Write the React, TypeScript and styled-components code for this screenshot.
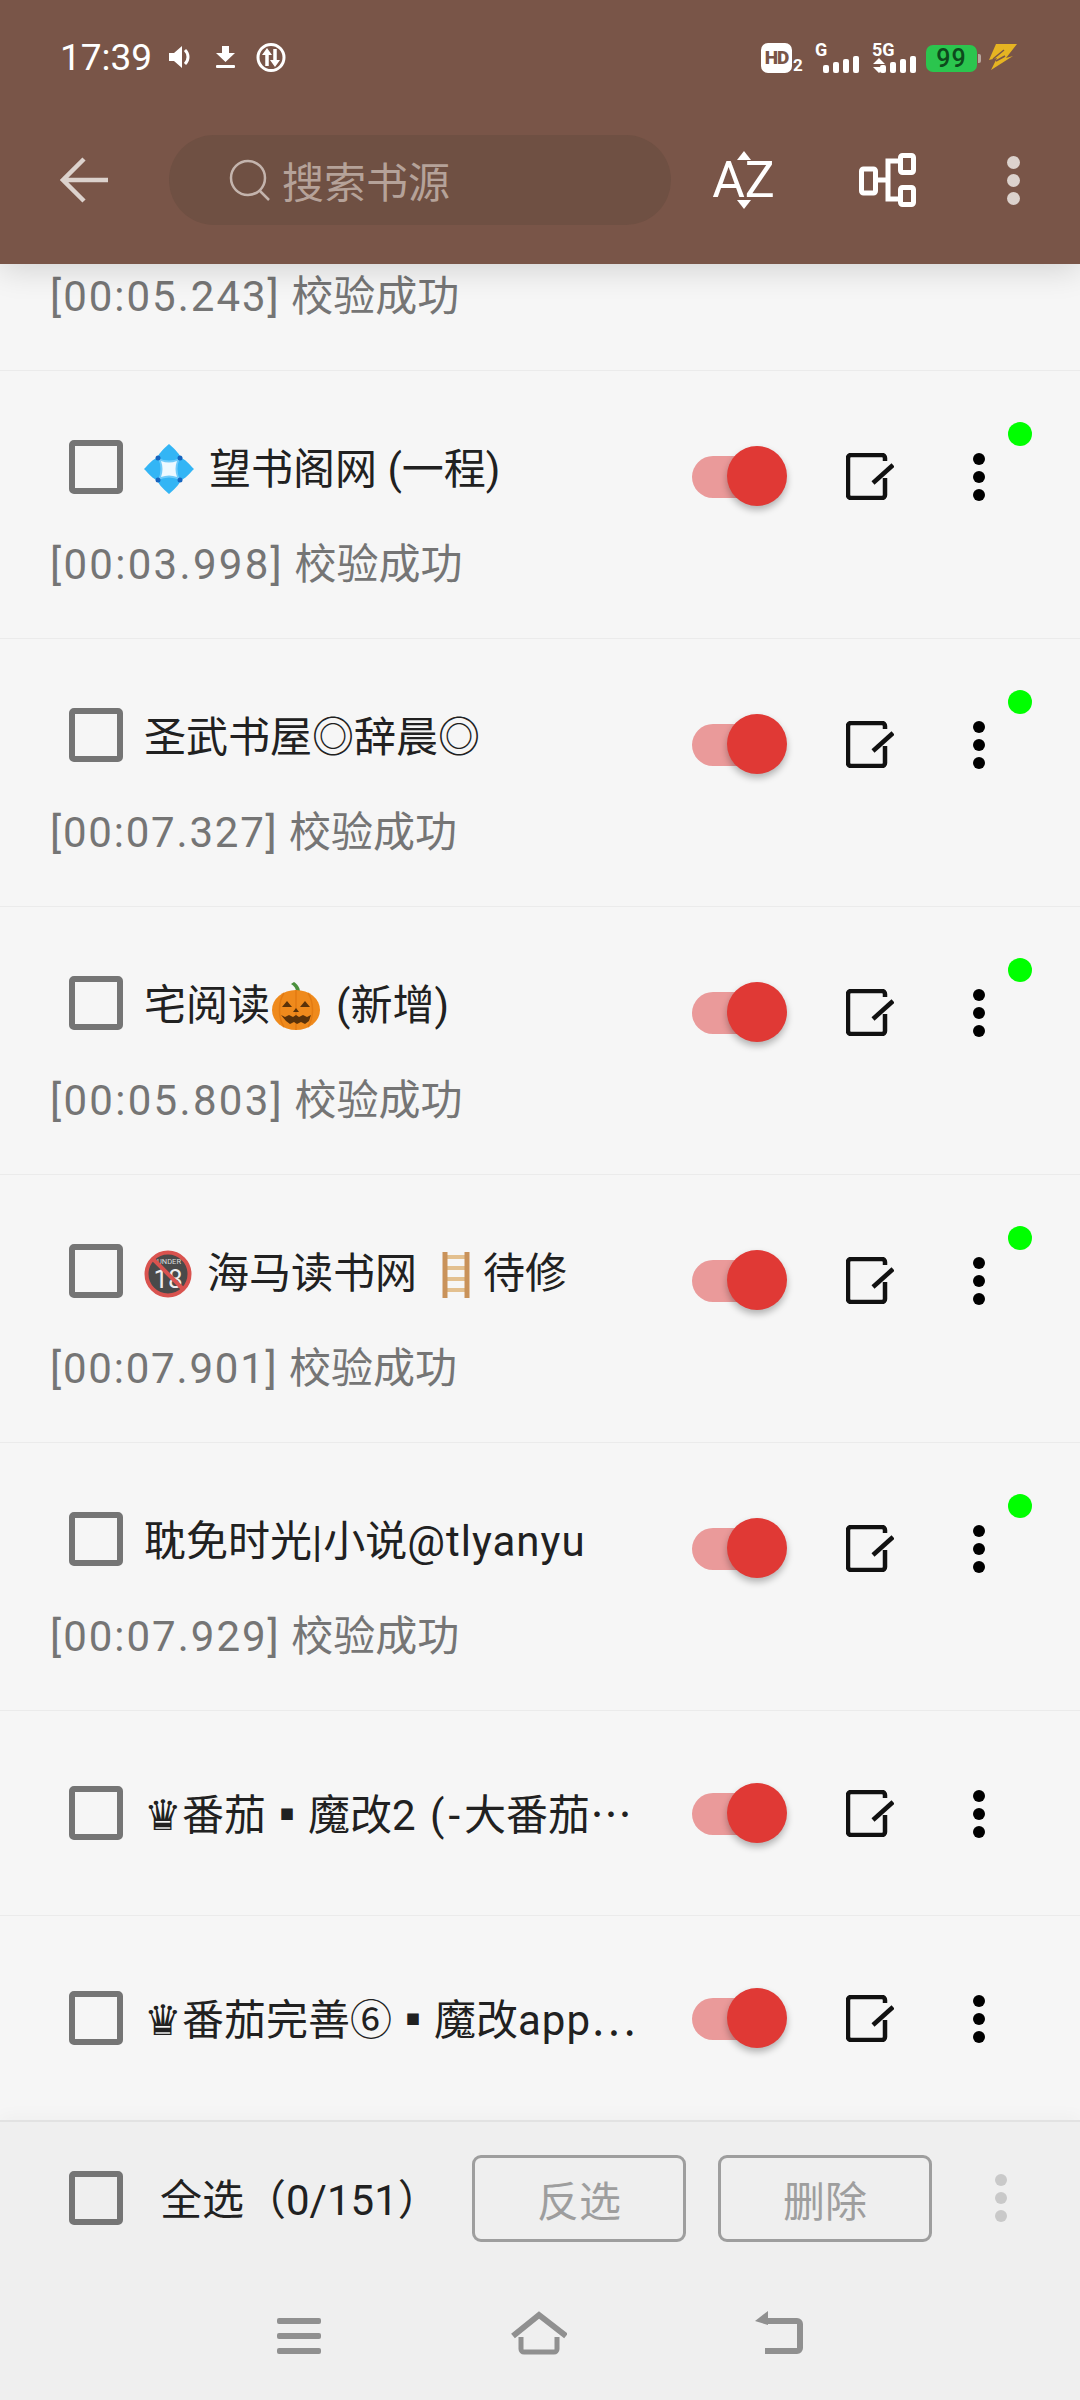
import React from 'react'
import styled, { createGlobalStyle } from 'styled-components'

const FONT = `Roboto, "Noto Sans CJK SC", sans-serif`

const GlobalStyle = createGlobalStyle`
  html, body {
    margin: 0;
    padding: 0;
    background: #f6f6f6;
  }
  * {
    box-sizing: border-box;
  }
`

const Page = styled.div`
  width: 1080px;
  height: 2400px;
  display: flex;
  flex-direction: column;
  overflow: hidden;
  background: #f6f6f6;
  font-family: ${FONT};
`

const Header = styled.header`
  height: 264px;
  flex: none;
  background: #795548;
  position: relative;
  z-index: 2;
  box-shadow: 0 6px 30px rgba(0, 0, 0, 0.14);
`

const StatusBar = styled.div`
  height: 96px;
  padding: 18px 62px 0 60px;
  display: flex;
  align-items: center;
`

const Clock = styled.span`
  font-size: 37px;
  color: #fff;
  margin-right: 19px;
  width: 90px;
`

const StatusGlyph = styled.svg<{ $ml?: number; $mb?: number }>`
  display: block;
  flex: none;
  margin-left: ${(p) => p.$ml ?? 0}px;
  margin-bottom: ${(p) => p.$mb ?? 0}px;
`

const StatusRight = styled.div`
  margin-left: auto;
  display: flex;
  align-items: flex-end;
  height: 32px;
`

const HdBadge = styled.span`
  width: 31px;
  height: 30px;
  border-radius: 7px;
  background: #fff;
  color: #795548;
  font-size: 19px;
  font-weight: 900;
  line-height: 30px;
  text-align: center;
  letter-spacing: -1px;
`

const HdIndex = styled.span`
  margin-left: 1px;
  width: 12px;
  color: #fff;
  font-size: 17px;
  font-weight: 700;
  line-height: 15px;
`

const Signal = styled.div<{ $w: number; $ml: number }>`
  position: relative;
  width: ${(p) => p.$w}px;
  height: 30px;
  margin-left: ${(p) => p.$ml}px;
  display: flex;
  align-items: flex-end;
  justify-content: flex-end;
  gap: 4px;
`

const SignalLabel = styled.span`
  position: absolute;
  left: 0;
  top: -2px;
  color: #fff;
  font-size: 18px;
  font-weight: 700;
  line-height: 17px;
`

const Bar = styled.i<{ $h: number }>`
  display: block;
  width: 6px;
  height: ${(p) => p.$h}px;
  border-radius: 2px;
  background: #fff;
`

const Arrows = styled.svg`
  position: absolute;
  left: 0;
  bottom: 0;
`

const Battery = styled.div`
  width: 51px;
  height: 27px;
  margin-left: 10px;
  margin-bottom: 1px;
  border-radius: 7px;
  background: #2bc54e;
  color: #0d4a1c;
  font-size: 25px;
  font-weight: 500;
  line-height: 27px;
  text-align: center;
  letter-spacing: 1px;
`

const BatteryNub = styled.i`
  display: block;
  width: 3px;
  height: 9px;
  margin: 0 0 10px 1px;
  border-radius: 0 2px 2px 0;
  background: #b9a79f;
`

const Toolbar = styled.div`
  height: 168px;
  padding-left: 60px;
  display: flex;
  align-items: center;
`

const SearchBox = styled.div`
  width: 502px;
  height: 90px;
  margin-left: 61px;
  padding-left: 60px;
  border-radius: 45px;
  background: #6f5043;
  display: flex;
  align-items: center;
  gap: 11px;
`

const SearchHint = styled.span`
  font-size: 42px;
  color: #b5a299;
  margin-bottom: 2px;
`

const SortIcon = styled.div`
  width: 61px;
  margin-left: 42px;
  display: flex;
  flex-direction: column;
  align-items: center;
  gap: 3px;
  color: #fff;
`

const SortLetters = styled.span`
  font-size: 50px;
  line-height: 34px;
  height: 34px;
  white-space: nowrap;
`

const Triangle = styled.i<{ $down?: boolean }>`
  display: block;
  width: 0;
  height: 0;
  border-left: 7px solid transparent;
  border-right: 7px solid transparent;
  ${(p) => (p.$down ? 'border-top: 9px solid #fff;' : 'border-bottom: 9px solid #fff;')}
`

const ToolGlyph = styled.svg<{ $ml: number }>`
  display: block;
  flex: none;
  margin-left: ${(p) => p.$ml}px;
`

const Kebab = styled.div<{ $size: number; $gap: number; $color: string; $ml?: number }>`
  flex: none;
  display: flex;
  flex-direction: column;
  gap: ${(p) => p.$gap}px;
  margin-left: ${(p) => p.$ml ?? 0}px;

  i {
    display: block;
    width: ${(p) => p.$size}px;
    height: ${(p) => p.$size}px;
    border-radius: 50%;
    background: ${(p) => p.$color};
  }
`

const List = styled.main`
  flex: 1;
  min-height: 0;
  overflow: hidden;
`

const PartialRow = styled.div`
  height: 107px;
  padding: 8px 0 0 50px;
  border-bottom: 1px solid #ebebeb;
`

const Row = styled.div<{ $sub: boolean }>`
  position: relative;
  height: ${(p) => (p.$sub ? 268 : 205)}px;
  flex: none;
  border-bottom: 1px solid #ebebeb;
  padding-top: ${(p) => (p.$sub ? 69 : 75)}px;
`

const RowTop = styled.div`
  padding-left: 69px;
  display: flex;
  align-items: flex-start;
  height: 54px;
`

const Checkbox = styled.span`
  display: block;
  flex: none;
  width: 54px;
  height: 54px;
  border: 6px solid #757575;
  border-radius: 5px;
`

const Title = styled.div`
  width: 500px;
  margin-left: 21px;
  font-size: 42px;
  line-height: 54px;
  padding-top: 3px;
  color: #212121;
  white-space: nowrap;
`

const Latin = styled.span<{ $track?: number }>`
  letter-spacing: ${(p) => p.$track ?? 1}px;
`

const Emoji = styled.svg<{ $ml?: number; $mr?: number }>`
  display: inline-block;
  vertical-align: -10px;
  margin-left: ${(p) => p.$ml ?? 0}px;
  margin-right: ${(p) => p.$mr ?? 0}px;
`

const Actions = styled.div<{ $sub: boolean }>`
  position: absolute;
  top: ${(p) => (p.$sub ? 75 : 72)}px;
  left: 692px;
  display: flex;
  align-items: center;
  height: 61px;
`

const Toggle = styled.div`
  position: relative;
  width: 95px;
  height: 61px;
  display: flex;
  align-items: center;
`

const ToggleTrack = styled.span`
  display: block;
  width: 78px;
  height: 42px;
  border-radius: 21px;
  background: #ea9a9a;
`

const ToggleThumb = styled.span`
  position: absolute;
  right: 0;
  top: 0;
  width: 60px;
  height: 60px;
  border-radius: 50%;
  background: #e03935;
  box-shadow: 0 4px 7px rgba(0, 0, 0, 0.28);
`

const StatusDot = styled.span`
  position: absolute;
  top: 51px;
  right: 48px;
  width: 24px;
  height: 24px;
  border-radius: 50%;
  background: #00ff00;
`

const CheckLog = styled.div`
  font-size: 42px;
  line-height: 50px;
  color: #757575;
  white-space: nowrap;
`

const LogTime = styled.span<{ $track: number }>`
  letter-spacing: ${(p) => p.$track}px;
`

const RowLog = styled(CheckLog)`
  margin: 46px 0 0 50px;
`

const Footer = styled.footer`
  height: 280px;
  flex: none;
  background: #efefef;
  border-top: 2px solid #e2e2e2;
  position: relative;
  z-index: 1;
  box-shadow: 0 -4px 16px rgba(0, 0, 0, 0.03);
`

const ActionBar = styled.div`
  height: 152px;
  padding: 0 73px 0 69px;
  display: flex;
  align-items: center;
`

const SelectAll = styled.span`
  flex: 1;
  margin: 0 0 3px 37px;
  font-size: 42px;
  color: #212121;
`

const OutlineButton = styled.button`
  width: 214px;
  height: 87px;
  margin-right: 32px;
  padding: 0;
  background: transparent;
  border: 3px solid #9e9e9e;
  border-radius: 9px;
  font-family: ${FONT};
  font-size: 42px;
  color: #9e9e9e;

  &:last-of-type {
    margin-right: 63px;
  }
`

const NavBar = styled.nav`
  height: 126px;
  padding-top: 37px;
  display: flex;
  justify-content: center;
  align-items: flex-start;
  gap: 188px;
`

const MenuGlyph = styled.div`
  width: 44px;
  height: 43px;
  padding-top: 7px;
  display: flex;
  flex-direction: column;
  gap: 9px;

  i {
    display: block;
    height: 6px;
    border-radius: 2px;
    background: #909090;
  }
`

const DiamondEmoji = () => (
  <Emoji width="50" height="50" viewBox="0 0 50 50" $mr={15}>
    <path
      d="M25 0C32 6 36 11 37 14C41 15 45 20 50 25C45 30 41 35 37 36C36 39 32 44 25 50C18 44 14 39 13 36C9 35 5 30 0 25C5 20 9 15 13 14C14 11 18 6 25 0Z"
      fill="#33b5f5"
    />
    <path d="M14 14Q25 19 36 14Q31 25 36 36Q25 31 14 36Q19 25 14 14Z" fill="#6fcbfa" />
    <path d="M17 17Q25 20 33 17Q30 25 33 33Q25 30 17 33Q20 25 17 17Z" fill="#eef9ff" />
    <circle cx="14" cy="14" r="2.500" fill="#1565c0" />
    <circle cx="36" cy="14" r="2.500" fill="#1565c0" />
    <circle cx="14" cy="36" r="2.500" fill="#1565c0" />
    <circle cx="36" cy="36" r="2.500" fill="#1565c0" />
  </Emoji>
)

const PumpkinEmoji = () => (
  <Emoji width="48" height="48" viewBox="0 0 48 48" $ml={2} $mr={16}>
    <path d="M24 10C24 6 22 4 19 2l3-2c3 2 6 5 6 10Z" fill="#4a8f3c" />
    <ellipse cx="24" cy="28" rx="24" ry="20" fill="#ef8a1c" />
    <path d="M24 8V48M12 11C6 20 6 36 12 45M36 11C42 20 42 36 36 45" stroke="#e37b12" strokeWidth="1.500" fill="none" />
    <path d="M10 25l5-6 5 6ZM28 25l5-6 5 6ZM21 30l3-4 3 4Z" fill="#5a3209" />
    <path d="M9 33l4 2 4-2 4 2 3-2 3 2 4-2 4 2 4-2-2 6-4 3-4-2-4 2-3-2-4 2-4-3Z" fill="#5a3209" />
  </Emoji>
)

const UnderEighteenEmoji = () => (
  <Emoji width="48" height="48" viewBox="0 0 48 48" $mr={15}>
    <circle cx="24" cy="24" r="21.500" fill="#4a4a4a" stroke="#d9534f" strokeWidth="4" />
    <text x="25" y="14" fontSize="7.500" fill="#ddd" textAnchor="middle" fontFamily="Roboto, sans-serif">
      UNDER
    </text>
    <text x="24" y="38" fontSize="26" fill="#eee" textAnchor="middle" fontFamily="Roboto, sans-serif">
      18
    </text>
    <path d="M9 9 39 39" stroke="#d9534f" strokeWidth="4" />
  </Emoji>
)

const LadderEmoji = () => (
  <Emoji width="28" height="46" viewBox="0 0 28 46" $ml={25} $mr={13}>
    <path d="M5 5h18M5 16h18M5 27h18M5 38h18" stroke="#e3c08f" strokeWidth="4" />
    <path d="M3 0v46M25 0v46" stroke="#c9925a" strokeWidth="5" />
  </Emoji>
)

type Source = { name: React.ReactNode; time?: string; track?: number }

const sources: Source[] = [
  {
    name: (
      <>
        <DiamondEmoji />望书阁网 (一程)
      </>
    ),
    time: '[00:03.998]',
    track: 2.3,
  },
  { name: '圣武书屋◎辞晨◎', time: '[00:07.327]', track: 1.8 },
  {
    name: (
      <>
        宅阅读<PumpkinEmoji />(新增)
      </>
    ),
    time: '[00:05.803]',
    track: 2.3,
  },
  {
    name: (
      <>
        <UnderEighteenEmoji />海马读书网<LadderEmoji />待修
      </>
    ),
    time: '[00:07.901]',
    track: 1.8,
  },
  {
    name: (
      <>
        耽免时光<Latin>|</Latin>小说<Latin>@tlyanyu</Latin>
      </>
    ),
    time: '[00:07.929]',
    track: 2,
  },
  {
    name: (
      <>
        ♛番茄▪魔改2<Latin $track={4}> (-</Latin>大番茄⋯
      </>
    ),
  },
  {
    name: (
      <>
        ♛番茄完善⑥▪魔改<Latin>app</Latin>⋯
      </>
    ),
  },
]

const EditIcon = () => (
  <ToolGlyph $ml={59} width="48" height="47" viewBox="0 0 48 47" fill="none" stroke="#111" strokeWidth="4.500">
    <path d="M39 8V5a3 3 0 0 0-3-3H5a3 3 0 0 0-3 3v37a3 3 0 0 0 3 3h31a3 3 0 0 0 3-3V25" />
    <path d="M27 30 47 12" />
  </ToolGlyph>
)

const SourceRow = ({ source }: { source: Source }) => {
  const hasLog = Boolean(source.time)
  return (
    <Row $sub={hasLog}>
      <RowTop>
        <Checkbox />
        <Title>{source.name}</Title>
      </RowTop>
      {hasLog && (
        <RowLog>
          <LogTime $track={source.track ?? 0}>{source.time}</LogTime> 校验成功
        </RowLog>
      )}
      <Actions $sub={hasLog}>
        <Toggle>
          <ToggleTrack />
          <ToggleThumb />
        </Toggle>
        <EditIcon />
        <Kebab $size={12} $gap={6} $color="#000" $ml={79}>
          <i />
          <i />
          <i />
        </Kebab>
      </Actions>
      {hasLog && <StatusDot />}
    </Row>
  )
}

export default function App() {
  return (
    <Page>
      <GlobalStyle />
      <Header>
        <StatusBar>
          <Clock>17:39</Clock>
          <StatusGlyph width="24" height="24" viewBox="0 0 24 24" fill="#fff">
            <path d="M0 8h5l8-7v22l-8-7H0Z" />
            <path d="M16 5c4 4 4 10 0 14" stroke="#fff" strokeWidth="3" fill="none" />
          </StatusGlyph>
          <StatusGlyph $ml={23} width="19" height="22" viewBox="0 0 19 22" fill="#fff">
            <path d="M6 0h7v7h6l-9.500 9L0 7h6Z" />
            <rect x="0" y="19" width="19" height="3" rx="1" />
          </StatusGlyph>
          <StatusGlyph $ml={21} width="30" height="31" viewBox="0 0 30 31" fill="none" stroke="#fff">
            <circle cx="15" cy="15.500" r="13" strokeWidth="3" />
            <path d="M11 24V11M19 7v13" strokeWidth="3.500" />
            <path d="M6 13l5-7 5 7ZM14 18l5 7 5-7Z" fill="#fff" stroke="none" />
          </StatusGlyph>
          <StatusRight>
            <HdBadge>HD</HdBadge>
            <HdIndex>2</HdIndex>
            <Signal $w={44} $ml={10}>
              <SignalLabel>G</SignalLabel>
              <Bar $h={8} />
              <Bar $h={11} />
              <Bar $h={14} />
              <Bar $h={17} />
            </Signal>
            <Signal $w={44} $ml={13}>
              <SignalLabel>5G</SignalLabel>
              <Arrows width="14" height="15" viewBox="0 0 14 15" fill="#fff">
                <path d="M7 0l6 6H1ZM1 9h12l-6 6Z" />
              </Arrows>
              <Bar $h={8} />
              <Bar $h={11} />
              <Bar $h={14} />
              <Bar $h={17} />
            </Signal>
            <Battery>99</Battery>
            <BatteryNub />
            <StatusGlyph $ml={8} $mb={3} width="29" height="26" viewBox="0 0 29 26" fill="#e6b422">
              <path d="M7 0H28L17 14l7-2L2 26l6-12-8 2Z" />
              <path d="M4 15 15 6M7 17l9-5" stroke="#795548" strokeWidth="1.500" fill="none" />
            </StatusGlyph>
          </StatusRight>
        </StatusBar>
        <Toolbar>
          <ToolGlyph $ml={0} width="48" height="46" viewBox="0 0 48 46" fill="none" stroke="#dcd2cd" strokeWidth="4.500">
            <path d="M48 23H4M24 2 3 23l21 21" />
          </ToolGlyph>
          <SearchBox>
            <svg width="42" height="42" viewBox="0 0 42 42" fill="none" stroke="#c4b4ad" strokeWidth="2.500">
              <circle cx="19" cy="19" r="17" />
              <path d="M30 31 40 41" />
            </svg>
            <SearchHint>搜索书源</SearchHint>
          </SearchBox>
          <SortIcon>
            <Triangle />
            <SortLetters>AZ</SortLetters>
            <Triangle $down />
          </SortIcon>
          <ToolGlyph $ml={85} width="57" height="54" viewBox="0 0 57 54" fill="none" stroke="#fff" strokeWidth="5">
            <rect x="2.500" y="16" width="14" height="24" rx="2" />
            <rect x="41.500" y="2.500" width="13" height="17" rx="2" />
            <rect x="41.500" y="34.500" width="13" height="17" rx="2" />
            <path d="M17 27H29M41 8H29V46H41" />
          </ToolGlyph>
          <Kebab $size={13} $gap={5} $color="#dcd2cd" $ml={91}>
            <i />
            <i />
            <i />
          </Kebab>
        </Toolbar>
      </Header>
      <List>
        <PartialRow>
          <CheckLog>
            <LogTime $track={2}>[00:05.243]</LogTime> 校验成功
          </CheckLog>
        </PartialRow>
        {sources.map((source, index) => (
          <SourceRow key={index} source={source} />
        ))}
      </List>
      <Footer>
        <ActionBar>
          <Checkbox />
          <SelectAll>全选（0/151）</SelectAll>
          <OutlineButton>反选</OutlineButton>
          <OutlineButton>删除</OutlineButton>
          <Kebab $size={12} $gap={6} $color="#c9c9c9">
            <i />
            <i />
            <i />
          </Kebab>
        </ActionBar>
        <NavBar>
          <MenuGlyph>
            <i />
            <i />
            <i />
          </MenuGlyph>
          <svg width="58" height="44" viewBox="0 0 58 44" fill="none" stroke="#909090" strokeWidth="6">
            <path d="M4 25 30 4 57 25" />
            <path d="M12 26V38a3 3 0 0 0 3 3H45a3 3 0 0 0 3-3V26" strokeWidth="5" />
          </svg>
          <svg width="48" height="43" viewBox="0 0 48 43" fill="none" stroke="#909090" strokeWidth="6">
            <path d="M12 10H42a3 3 0 0 1 3 3V37a3 3 0 0 1-3 3H10" />
            <path d="M0 10 13 0V14Z" fill="#909090" stroke="none" />
          </svg>
        </NavBar>
      </Footer>
    </Page>
  )
}
